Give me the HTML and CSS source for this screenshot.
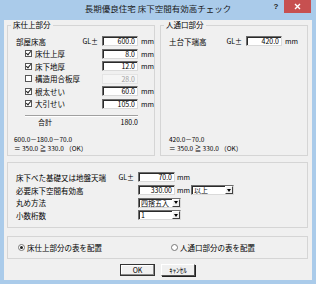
FILE: index.html
```html
<!DOCTYPE html>
<html lang="ja">
<head>
    <meta charset="UTF-8">
    <title>長期優良住宅 床下空間有効高チェック</title>
    <link rel="stylesheet" href="styles.css">
</head>
<body>
    <div class="window">
        <div class="titlebar">
            <span class="title">長期優良住宅 床下空間有効高チェック</span>
            <div class="caption-btns">
                <span class="help">?</span>
                <span class="close">
                    <svg width="7" height="7" viewBox="0 0 7 7"><path d="M1 1L6 6M6 1L1 6" stroke="#fff" stroke-width="1.4"/></svg>
                </span>
            </div>
        </div>

        <div class="client">
            <div class="top-row">
                <fieldset class="group">
                    <legend>床仕上部分</legend>
                    <div class="gbody">
                        <div class="row">
                            <span class="lbl">部屋床高<span class="gl">GL±</span></span>
                            <span class="field">600.0</span><span class="unit">mm</span>
                        </div>
                        <div class="row">
                            <span class="lbl cbl"><span class="cb on"></span>床仕上厚</span>
                            <span class="field">8.0</span><span class="unit">mm</span>
                        </div>
                        <div class="row">
                            <span class="lbl cbl"><span class="cb on"></span>床下地厚</span>
                            <span class="field">12.0</span><span class="unit">mm</span>
                        </div>
                        <div class="row">
                            <span class="lbl cbl"><span class="cb"></span>構造用合板厚</span>
                            <span class="field off">28.0</span>
                        </div>
                        <div class="row">
                            <span class="lbl cbl"><span class="cb on"></span>根太せい</span>
                            <span class="field">60.0</span><span class="unit">mm</span>
                        </div>
                        <div class="row">
                            <span class="lbl cbl"><span class="cb on"></span>大引せい</span>
                            <span class="field">105.0</span><span class="unit">mm</span>
                        </div>
                        <div class="sep"></div>
                        <div class="total"><span>合計</span><span>180.0</span></div>
                        <div class="formula shift">
                            <div>600.0－180.0－70.0</div>
                            <div>＝ 350.0 ≧ 330.0 （OK）</div>
                        </div>
                    </div>
                </fieldset>

                <fieldset class="group">
                    <legend>人通口部分</legend>
                    <div class="gbody">
                        <div class="row">
                            <span class="lbl short">土台下端高<span class="gl">GL±</span></span>
                            <span class="field">420.0</span><span class="unit">mm</span>
                        </div>
                        <div class="formula">
                            <div>420.0－70.0</div>
                            <div>＝ 350.0 ≧ 330.0 （OK）</div>
                        </div>
                    </div>
                </fieldset>
            </div>

            <div class="box settings">
                <div class="row">
                    <span class="lbl wide">床下べた基礎又は地盤天端<span class="gl">GL±</span></span>
                    <span class="field w37">70.0</span><span class="unit">mm</span>
                </div>
                <div class="row">
                    <span class="lbl wide">必要床下空間有効高</span>
                    <span class="field w37">330.00</span><span class="unit">mm</span>
                    <span class="combo after-unit">以上<span class="arrow"></span></span>
                </div>
                <div class="row">
                    <span class="lbl wide">丸め方法</span>
                    <span class="combo">四捨五入<span class="arrow"></span></span>
                </div>
                <div class="row">
                    <span class="lbl wide">小数桁数</span>
                    <span class="combo">1<span class="arrow"></span></span>
                </div>
            </div>

            <div class="box radios">
                <span class="opt"><span class="rb on"></span>床仕上部分の表を配置</span>
                <span class="opt"><span class="rb"></span>人通口部分の表を配置</span>
            </div>

            <div class="buttons">
                <span class="btn default">OK</span>
                <span class="btn">ｷｬﾝｾﾙ</span>
            </div>
        </div>
    </div>
</body>
</html>
```

FILE: styles.css
```css
body {
    margin: 0;
    font-family: "Noto Sans CJK JP", "Liberation Sans", sans-serif;
    font-size: 7.5px;
    color: #000;
}

.window {
    width: 316px;
    height: 284px;
    box-sizing: border-box;
    padding: 0 4px 4px;
    background: #aacbea;
    display: flex;
    flex-direction: column;
}

/* title bar */
.titlebar {
    height: 20px;
    display: grid;
    grid-template-columns: 1fr auto 1fr;
    align-items: start;
}

.title {
    grid-column: 2;
    font-size: 8.5px;
    line-height: 16px;
    color: #1a1a1a;
    white-space: nowrap;
}

.caption-btns {
    grid-column: 3;
    justify-self: end;
    display: flex;
    margin-right: 1px;
}

.help {
    width: 16px;
    height: 13px;
    line-height: 13px;
    text-align: center;
    font-family: "Liberation Sans", sans-serif;
    font-weight: bold;
    font-size: 8px;
    color: #222;
}

.close {
    width: 27px;
    height: 13px;
    background: #c75050;
    display: flex;
    align-items: center;
    justify-content: center;
}

/* client area */
.client {
    flex: 1;
    background: #f0f0f0;
    padding: 0 4px 0 3px;
    display: flex;
    flex-direction: column;
}

.top-row {
    display: flex;
    gap: 5px;
    height: 136px;
}

.group {
    flex: 1;
    min-width: 0;
    margin: 0;
    padding: 0;
    border: 1px solid #d5d5d5;
}

.group legend {
    margin-left: 3px;
    padding: 0 2px;
    line-height: 10px;
}

.gbody {
    height: 125px;
    box-sizing: border-box;
    padding: 5px 0 3px 8px;
    display: flex;
    flex-direction: column;
}

.row {
    height: 12.5px;
    display: flex;
    align-items: center;
    white-space: nowrap;
}

.lbl {
    width: 86px;
    box-sizing: border-box;
    display: flex;
    align-items: center;
    justify-content: space-between;
    padding-right: 4px;
}

.lbl.short {
    width: 77px;
}

.lbl.wide {
    width: 122px;
}

.cbl {
    justify-content: flex-start;
    padding-left: 9px;
}

.gl {
    font-size: 7px;
}

.cb {
    width: 7px;
    height: 7px;
    box-sizing: border-box;
    margin-right: 3px;
    border: 1px solid #555;
    background: #fff;
    position: relative;
}

.cb.on::after {
    content: "";
    position: absolute;
    left: 1px;
    top: -1px;
    width: 2px;
    height: 4px;
    border: solid #222;
    border-width: 0 1px 1px 0;
    transform: rotate(40deg);
}

.field {
    width: 36px;
    height: 10px;
    box-sizing: border-box;
    background: #fff;
    border: 1px solid;
    border-color: #6e6e6e #dadada #dadada #6e6e6e;
    box-shadow: inset 1px 1px 0 #2a2a2a;
    text-align: right;
    padding-right: 2px;
    font-size: 7px;
    line-height: 8px;
}

.field.w37 {
    width: 37px;
}

.field.off {
    background: #f5f5f5;
    border-color: #e4e4e4;
    box-shadow: none;
    color: #a0a0a0;
}

.unit {
    margin-left: 3px;
    font-size: 7px;
}

.sep {
    margin: 5px 0 0 9px;
    width: 113px;
    border-top: 1px solid #a0a0a0;
    border-bottom: 1px solid #fff;
}

.total {
    width: 122px;
    box-sizing: border-box;
    padding-left: 22px;
    display: flex;
    justify-content: space-between;
    line-height: 10px;
    font-size: 7px;
}

.formula {
    margin-top: auto;
    font-size: 6.5px;
    line-height: 8.5px;
    white-space: nowrap;
}

.formula.shift {
    margin-left: -2px;
}

/* lower boxes */
.box {
    border: 1px solid #d5d5d5;
    box-sizing: border-box;
}

.settings {
    margin-top: 6px;
    height: 66px;
    padding: 8px 0 0 8px;
}

.settings .row {
    height: 12.7px;
}

.settings .unit {
    margin-left: 2px;
}

.combo {
    width: 43px;
    height: 10px;
    box-sizing: border-box;
    display: flex;
    align-items: center;
    padding-left: 2px;
    background: #fff;
    border: 1px solid;
    border-color: #6e6e6e #dadada #dadada #6e6e6e;
    box-shadow: inset 1px 1px 0 #2a2a2a;
    font-size: 7px;
}

.combo.after-unit {
    margin-left: 1px;
}

.arrow {
    margin-left: auto;
    width: 8px;
    height: 8px;
    box-sizing: border-box;
    border: 1px solid;
    border-color: #fff #404040 #404040 #fff;
    background: #f0f0f0;
    display: flex;
    align-items: center;
    justify-content: center;
}

.arrow::after {
    content: "";
    border-top: 3px solid #000;
    border-left: 2px solid transparent;
    border-right: 2px solid transparent;
}

.radios {
    margin-top: 8px;
    height: 23px;
    padding-left: 10px;
    display: grid;
    grid-template-columns: 153px auto;
    align-items: center;
}

.opt {
    display: flex;
    align-items: center;
}

.rb {
    width: 7px;
    height: 7px;
    box-sizing: border-box;
    margin-right: 2px;
    border: 1px solid #777;
    border-radius: 50%;
    background: #fff;
    display: flex;
    align-items: center;
    justify-content: center;
}

.rb.on::after {
    content: "";
    width: 3px;
    height: 3px;
    border-radius: 50%;
    background: #222;
}

.buttons {
    margin-top: 5px;
    display: flex;
    justify-content: center;
    gap: 6px;
}

.btn {
    width: 34px;
    height: 12px;
    box-sizing: border-box;
    display: flex;
    align-items: center;
    justify-content: center;
    background: #f0f0f0;
    border: 1px solid;
    border-color: #fff #555 #555 #fff;
    box-shadow: 1px 1px 0 #222;
    font-size: 7px;
}

.btn.default {
    width: 35px;
    border-color: #333;
    box-shadow: inset -1px -1px 0 #888, inset 1px 1px 0 #fff;
}
```
